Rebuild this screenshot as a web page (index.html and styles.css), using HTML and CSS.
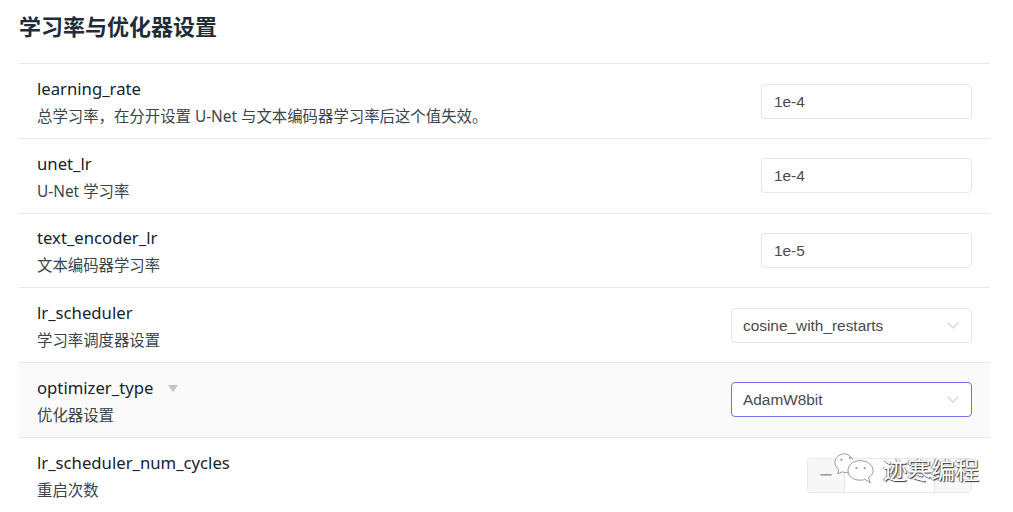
FILE: index.html
```html
<!DOCTYPE html>
<html lang="zh-CN">
<head>
    <meta charset="UTF-8">
    <title>学习率与优化器设置</title>
    <link rel="stylesheet" href="styles.css">
</head>
<body>
    <h2 class="title">学习率与优化器设置</h2>
    <div class="list">
        <div class="row">
            <div class="info">
                <div class="name">learning_rate</div>
                <div class="desc">总学习率，在分开设置 U-Net 与文本编码器学习率后这个值失效。</div>
            </div>
            <div class="input">1e-4</div>
        </div>
        <div class="row">
            <div class="info">
                <div class="name">unet_lr</div>
                <div class="desc">U-Net 学习率</div>
            </div>
            <div class="input">1e-4</div>
        </div>
        <div class="row">
            <div class="info">
                <div class="name">text_encoder_lr</div>
                <div class="desc">文本编码器学习率</div>
            </div>
            <div class="input">1e-5</div>
        </div>
        <div class="row">
            <div class="info">
                <div class="name">lr_scheduler</div>
                <div class="desc">学习率调度器设置</div>
            </div>
            <div class="select">
                <span>cosine_with_restarts</span>
                <svg class="chevron" viewBox="0 0 14 8"><path d="M1 1l6 6 6-6"/></svg>
            </div>
        </div>
        <div class="row hovered">
            <div class="info">
                <div class="name">optimizer_type <span class="caret"></span></div>
                <div class="desc">优化器设置</div>
            </div>
            <div class="select focused">
                <span>AdamW8bit</span>
                <svg class="chevron" viewBox="0 0 14 8"><path d="M1 1l6 6 6-6"/></svg>
            </div>
        </div>
        <div class="row">
            <div class="info">
                <div class="name">lr_scheduler_num_cycles</div>
                <div class="desc">重启次数</div>
            </div>
            <div class="number">
                <div class="step">−</div>
                <div class="value"></div>
                <div class="step"></div>
            </div>
        </div>
    </div>

    <!-- watermark on top of the last row -->
    <div class="watermark">
        <svg class="wechat" viewBox="0 0 44 36">
            <path d="M20 8C18 3 13 1 9 2 4 3 1 7 1 11c0 3 2 6 4 8l-1 4 5-2c2 1 4 1 6 1"/>
            <path d="M28 9c-8 0-13 5-13 11s6 10 13 10c2 0 3 0 5-1l6 4-2-6c3-2 5-4 5-7 0-6-6-11-14-11z"/>
            <circle cx="8" cy="8" r="1.2"/>
            <circle cx="17" cy="6" r="1.2"/>
            <circle cx="24" cy="17" r="1.2"/>
            <circle cx="33" cy="17" r="1.2"/>
        </svg>
        <span class="mark-text">迹寒编程</span>
    </div>
</body>
</html>
```
FILE: styles.css
```css
html, body {
    height: 512px;
    overflow: hidden;
}
body {
    margin: 0;
    padding: 0 23px 0 19px;
    position: relative;
    background-color: #fff;
    font-family: "Noto Sans", "Noto Sans CJK SC", sans-serif;
    color: #1f2d3a;
}
.title {
    margin: 0;
    height: 63.3px;
    padding-top: 10px;
    box-sizing: border-box;
    font-size: 22px;
    line-height: 30px;
    font-weight: 700;
    font-family: "Noto Sans CJK SC", sans-serif;
}
.row {
    display: flex;
    justify-content: space-between;
    align-items: center;
    height: 74.65px;
    box-sizing: border-box;
    padding: 0 18px;
    border-top: 1px solid #e6e6e6;
}
.row.hovered {
    background-color: #fafafa;
}
.row:last-child {
    align-items: flex-start;
    padding-top: 13px;
}
.info {
    padding-top: 2px;
}
.name {
    font-size: 16.7px;
    line-height: 24px;
    color: #17232e;
}
.desc {
    margin-top: 6px;
    font-size: 15.4px;
    line-height: 20px;
    color: #3a444e;
}
.row:last-child .info {
    padding-top: 0;
}
.caret {
    display: inline-block;
    margin-left: 10px;
    vertical-align: 2px;
    border-left: 5.5px solid transparent;
    border-right: 5.5px solid transparent;
    border-top: 7px solid #c4c4c4;
}
.input, .select {
    height: 35px;
    box-sizing: border-box;
    border: 1px solid #e6e6e6;
    border-radius: 4px;
    background-color: #fff;
    font-family: "Liberation Sans", Arial, sans-serif;
    font-size: 15.4px;
    line-height: 33px;
    color: #4a4a4a;
}
.input {
    width: 211px;
    padding: 0 12px;
}
.select {
    width: 241px;
    padding: 0 12px 0 11px;
    display: flex;
    justify-content: space-between;
    align-items: center;
}
.select.focused {
    border-color: #7074e0;
}
.chevron {
    width: 12px;
    height: 7px;
    fill: none;
    stroke: #c8c8c8;
    stroke-width: 1.2;
}
.number {
    display: flex;
    width: 165px;
    height: 35px;
    margin-top: 7px;
    box-sizing: border-box;
    border: 1px solid #e6e6e6;
    border-radius: 4px;
}
.step {
    width: 36px;
    background-color: #f7f7f7;
    color: #999;
    font-size: 24px;
    line-height: 29px;
    text-align: center;
}
.value {
    flex: 1;
    border-left: 1px solid #e6e6e6;
    border-right: 1px solid #e6e6e6;
}
.watermark {
    position: absolute;
    left: 834px;
    top: 452px;
    display: flex;
    align-items: center;
    gap: 8px;
}
.wechat {
    width: 41px;
    height: 34px;
    fill: #fff;
    stroke: #777;
    stroke-width: 0.8;
}
.wechat circle {
    fill: #999;
    stroke: none;
}
.mark-text {
    font-family: "Noto Sans CJK SC", sans-serif;
    font-size: 24px;
    line-height: 34px;
    color: #fff;
    text-shadow: 1px 1px 1px #333, -1px 0 1px #888;
}
```
